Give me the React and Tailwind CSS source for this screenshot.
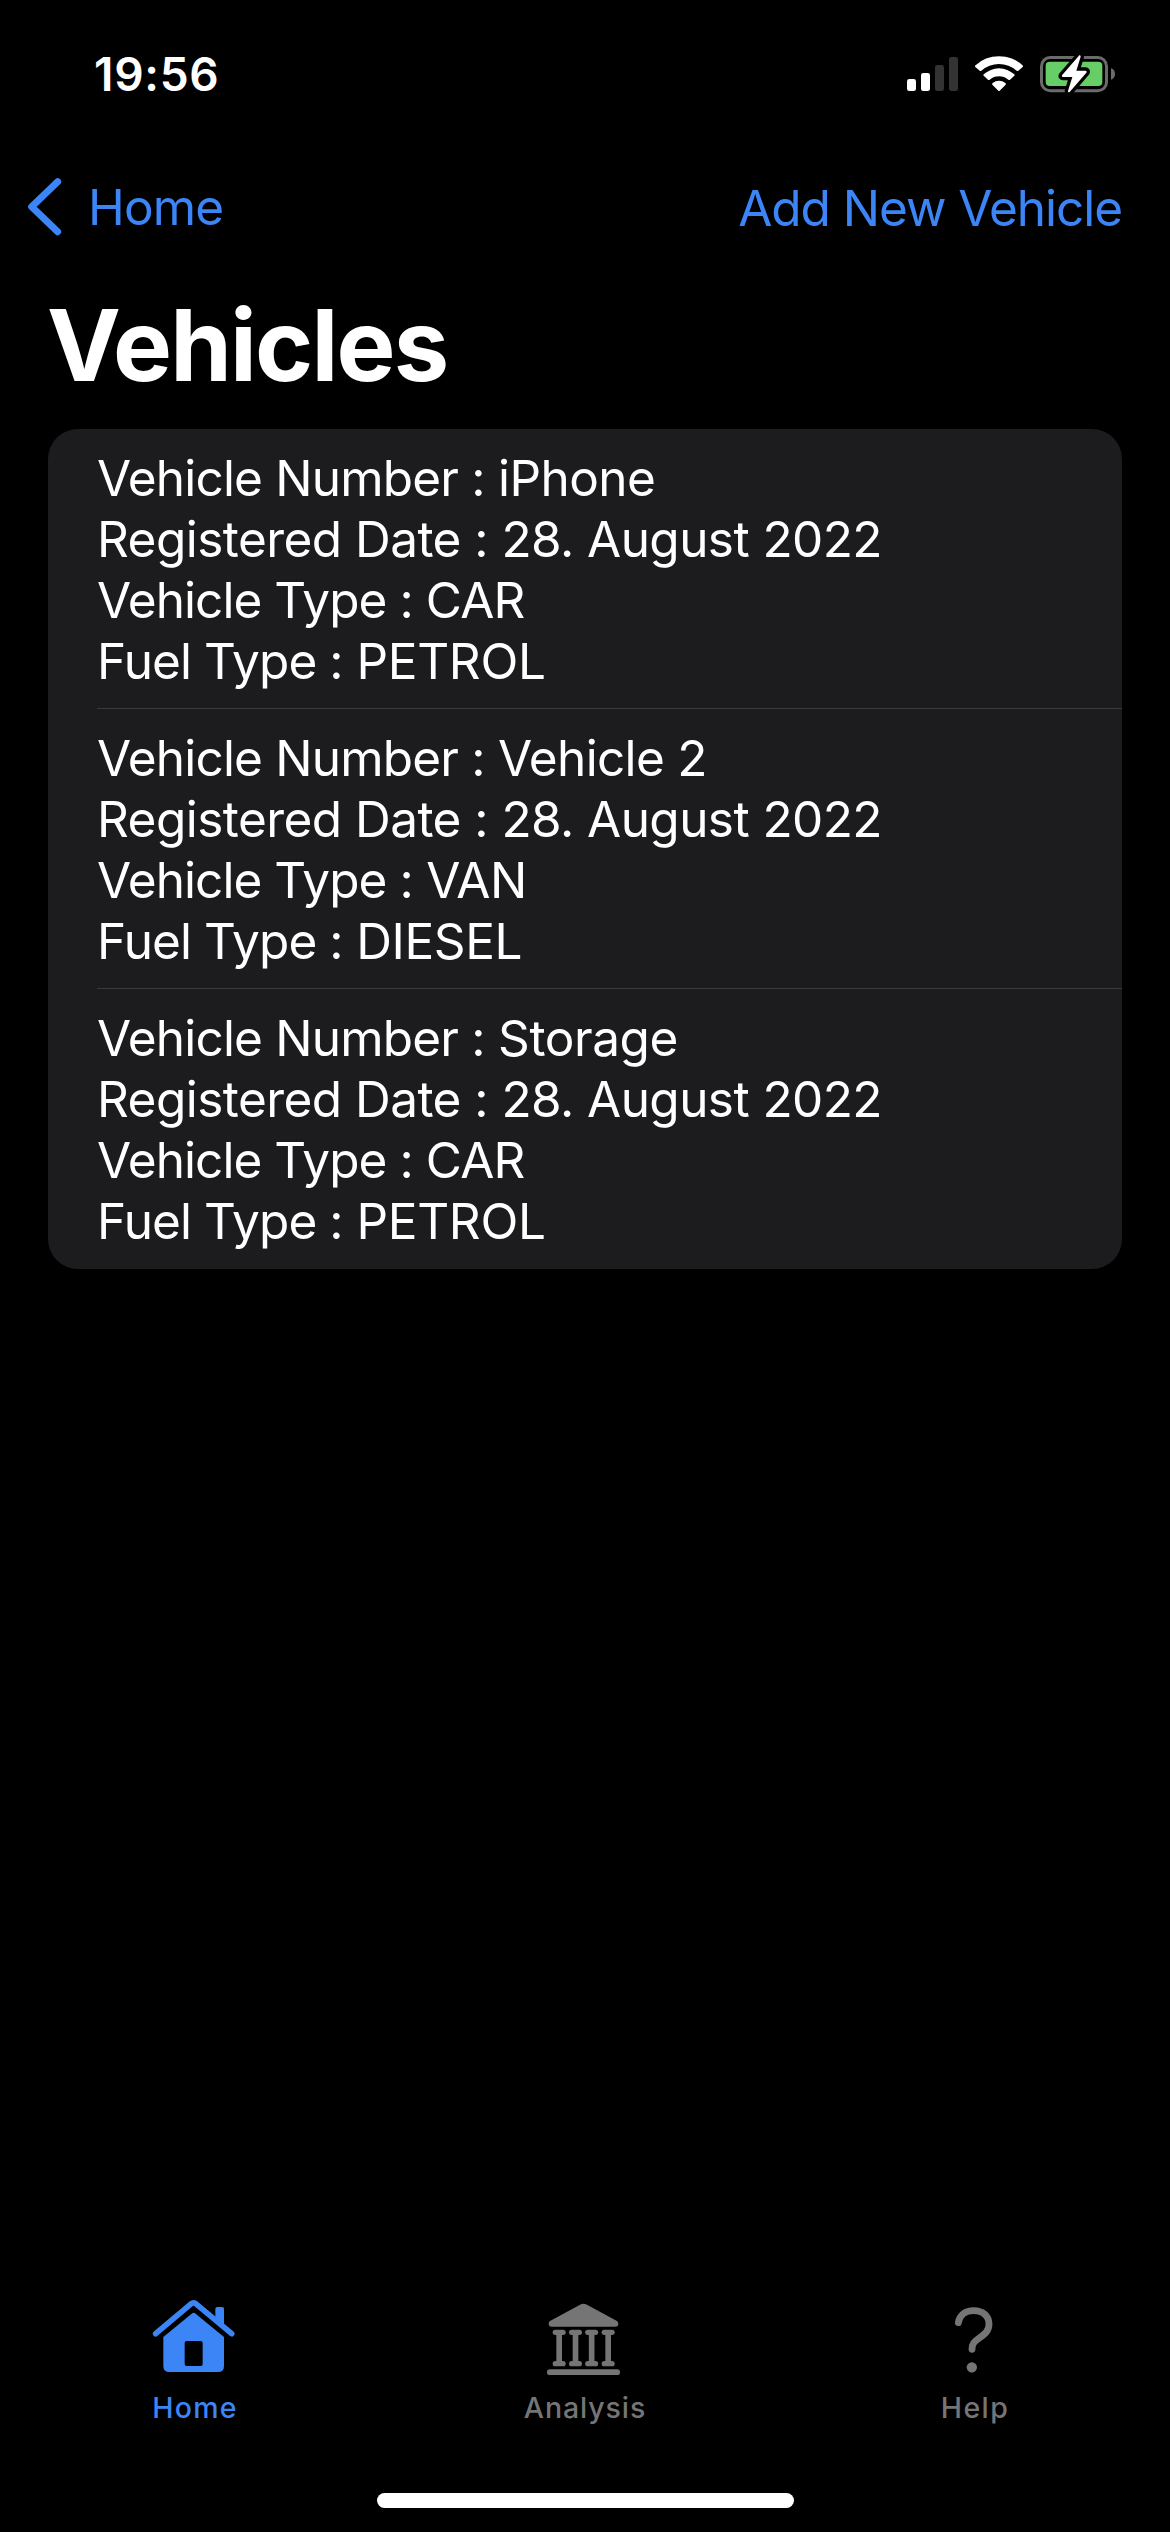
const vehicles = [
  {
    number: ["iPhone", "tracking-[-0.55px]"],
    type: ["CAR", "tracking-[-0.9px]"],
    fuel: ["PETROL", "tracking-[-0.28px]"],
  },
  {
    number: ["Vehicle 2", "tracking-[-0.67px]"],
    type: ["VAN", "tracking-[-0.6px]"],
    fuel: ["DIESEL", "tracking-[-0.4px]"],
  },
  {
    number: ["Storage", "tracking-[-0.43px]"],
    type: ["CAR", "tracking-[-0.9px]"],
    fuel: ["PETROL", "tracking-[-0.28px]"],
  },
];

function SignalIcon() {
  return (
    <svg className="h-[43px] w-[55px]" viewBox="75 66 165 129">
      <rect x="81" y="147" width="27" height="36" rx="7" fill="#fff" />
      <rect x="123" y="129" width="27" height="54" rx="7" fill="#fff" />
      <rect x="165" y="105" width="27" height="78" rx="7" fill="#333" />
      <rect x="207" y="81" width="27" height="102" rx="7" fill="#333" />
    </svg>
  );
}

function WifiIcon() {
  return (
    <svg className="h-[43px] w-[52px]" viewBox="279 66 156 129" fill="#fff">
      <path d="M285 107 A105 105 0 0 1 429 107 Q430 109 428 111 L415 122 Q413 124 410 122 A80 80 0 0 0 304 122 Q301 124 299 122 L286 111 Q284 109 285 107Z" />
      <path d="M311 133 A68 68 0 0 1 403 133 Q405 135 403 137 L390 149 Q388 151 385 149 A43 43 0 0 0 329 149 Q326 151 324 149 L311 137 Q309 135 311 133Z" />
      <path d="M338 159 A31 31 0 0 1 376 159 Q379 161 377 164 L359 182 Q357 184 355 182 L337 164 Q335 161 338 159Z" />
    </svg>
  );
}

function BatteryIcon() {
  return (
    <svg className="h-[43px] w-[79px]" viewBox="474 66 237 129">
      <rect x="484.5" y="82.5" width="195" height="100" rx="26" fill="none" stroke="#6b6b6b" strokeWidth="9" />
      <rect x="497" y="95" width="170" height="73" rx="12" fill="#67ce67" />
      <path d="M693 115 Q705 119 705 132 Q705 145 693 149Z" fill="#6b6b6b" />
      <path
        d="M598 76 L546 136 Q544 141 549 141 L577 141 L564 183 Q564 189 569 186 L619 128 Q622 122 616 122 L589 122 L602 80 Q602 74 598 76Z"
        fill="#fff" stroke="#000" strokeWidth="20" strokeLinejoin="round" paintOrder="stroke"
      />
    </svg>
  );
}

function HouseIcon() {
  return (
    <svg className="h-[85px] w-[130px]" viewBox="0 45 390 255" fill="#3b85f7">
      <path d="M77 161 L184 71 Q190 66 197 71 L305 161" fill="none" stroke="#3b85f7" strokeWidth="17" strokeLinecap="round" strokeLinejoin="round" />
      <path d="M256 116 V87 Q256 81 262 81 H276 Q282 81 282 87 V138Z" />
      <path fillRule="evenodd" d="M185 101 Q191 96 197 101 L282 171 V258 Q282 276 264 276 H118 Q100 276 100 258 V171Z M170 183 Q164 183 164 189 V252 Q164 258 170 258 H212 Q218 258 218 252 V189 Q218 183 212 183Z" />
    </svg>
  );
}

function ColumnsIcon() {
  return (
    <svg className="h-[85px] w-[170px]" viewBox="0 45 510 255" fill="#757575">
      <path d="M243 73 Q250 69 258 73 L351 123 Q355 126 355 131 Q355 140 346 140 H155 Q146 140 146 131 Q146 126 150 123Z" />
      {[177.5, 226.5, 275, 324.5].map((x) => (
        <g key={x}>
          <rect x={x - 19.5} y="149" width="39" height="16" rx="8" />
          <rect x={x - 8.5} y="155" width="17" height="98" />
          <rect x={x - 19.5} y="243" width="39" height="16" rx="8" />
        </g>
      ))}
      <rect x="141" y="268" width="219" height="17" rx="8.5" />
    </svg>
  );
}

function QuestionIcon() {
  return (
    <svg className="h-[85px] w-[130px]" viewBox="0 45 390 255">
      <path d="M145 128 C149 104 167 92 191 92 C219 92 237 108 237 132 C237 152 226 161 209 173 C192 185 186 191 186 208" fill="none" stroke="#757575" strokeWidth="20.5" strokeLinecap="round" strokeLinejoin="round" />
      <circle cx="185.5" cy="262" r="15.5" fill="#757575" />
    </svg>
  );
}

function Line({ label, labelClass, value, valueClass }) {
  return (
    <p className="h-[61px] whitespace-pre">
      <span className={labelClass}>{label} :</span>
      <span className={valueClass}> {value}</span>
    </p>
  );
}

function VehicleRow({ vehicle, last }) {
  return (
    <li className={`h-[280px] pt-[19px] ${last ? "" : "border-b border-[#3a3a3c]"}`}>
      <Line label="Vehicle Number" labelClass="tracking-[-0.82px]" value={vehicle.number[0]} valueClass={vehicle.number[1]} />
      <Line label="Registered Date" labelClass="tracking-[-0.54px]" value="28. August 2022" valueClass="tracking-[-0.56px]" />
      <Line label="Vehicle Type" labelClass="tracking-[-0.93px]" value={vehicle.type[0]} valueClass={vehicle.type[1]} />
      <Line label="Fuel Type" labelClass="tracking-[-0.9px]" value={vehicle.fuel[0]} valueClass={vehicle.fuel[1]} />
    </li>
  );
}

function Tab({ icon, label, className }) {
  return (
    <button className={`flex flex-1 flex-col items-center gap-2 text-[28.5px] leading-[40px] font-medium ${className}`}>
      {icon}
      <span>{label}</span>
    </button>
  );
}

export default function App() {
  return (
    <div className="flex h-[2532px] w-[1170px] flex-col overflow-hidden bg-black font-['Inter',sans-serif] text-white">
      <header className="flex h-[175px] items-start justify-between pt-[44px] pr-[53px] pl-[94px]">
        <span className="text-[46px] leading-[60px] font-semibold tracking-[0.7px]">19:56</span>
        <div className="flex gap-[13px] pt-2">
          <SignalIcon />
          <WifiIcon />
          <BatteryIcon />
        </div>
      </header>

      <nav className="flex h-[110px] items-start justify-between pr-[48px] pl-[25px] text-[49.5px] leading-[60px] text-[#3b85f7]">
        <button className="flex items-start gap-[23px]">
          <svg className="h-[63px] w-[40px]" viewBox="75 435 120 189" fill="none" stroke="#3b85f7" strokeWidth="21" strokeLinecap="round" strokeLinejoin="round">
            <path d="M173 455 L95 530 L173 605" />
          </svg>
          <span className="pt-[2px] tracking-[-0.9px]">Home</span>
        </button>
        <button className="pt-[3px] tracking-[-1.03px]">Add New Vehicle</button>
      </nav>

      <h1 className="h-[144px] pl-[47px] text-[99px] leading-[120px] font-bold tracking-[-1.8px]">Vehicles</h1>

      <ul className="mx-[48px] rounded-[30px] bg-[#1c1c1e] pl-[49px] text-[49.5px] leading-[61px]">
        {vehicles.map((v, i) => (
          <VehicleRow key={v.number[0]} vehicle={v} last={i === vehicles.length - 1} />
        ))}
      </ul>

      <footer className="mt-auto flex h-[237px] flex-col items-center justify-between pb-[24px]">
        <div className="flex w-full">
          <Tab icon={<HouseIcon />} label="Home" className="tracking-[1.3px] text-[#3b85f7]" />
          <Tab icon={<ColumnsIcon />} label="Analysis" className="tracking-[0.9px] text-[#757575]" />
          <Tab icon={<QuestionIcon />} label="Help" className="tracking-[1.4px] text-[#757575]" />
        </div>
        <div className="h-[15px] w-[417px] rounded-full bg-white" />
      </footer>
    </div>
  );
}
